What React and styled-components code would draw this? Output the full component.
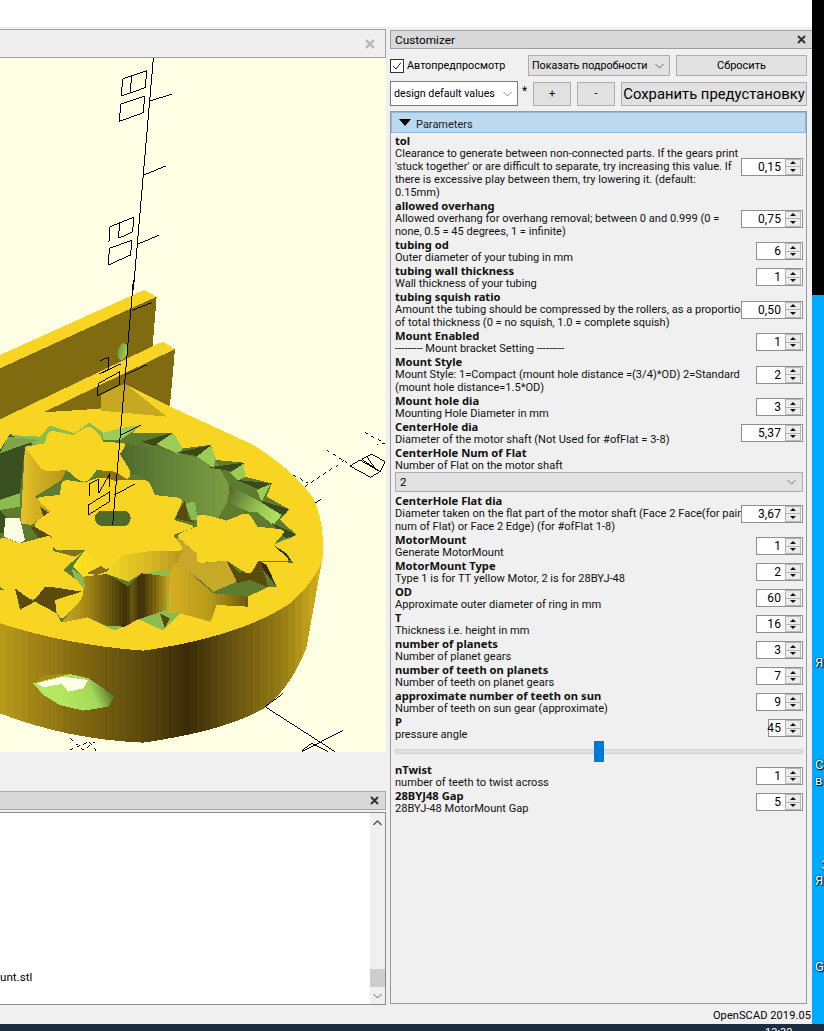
import React from 'react';
import styled, { createGlobalStyle } from 'styled-components';

const UI = `Roboto, "Noto Sans", sans-serif`;

const Global = createGlobalStyle`
  html, body { margin: 0; padding: 0; background: #fff; }
  body { font-family: ${UI}; font-size: 12px; color: #000; overflow: hidden; }
`;

const Page = styled.div`
  width: 824px; height: 1031px; overflow: hidden;
  display: grid; grid-template-columns: 812px 12px; grid-template-rows: 1024px 7px;
`;
const Window = styled.div`
  padding-top: 27px; background: #fff; display: flex; flex-direction: column;
`;
const WindowBody = styled.div`
  flex: 1; background: #f0f0f0; display: flex; flex-direction: column; padding-top: 2px; min-height: 0;
`;
const Docks = styled.div`
  height: 975px; display: grid; grid-template-columns: 386px 422px; column-gap: 4px;
`;
const LeftColumn = styled.div`display: flex; flex-direction: column;`;
const ViewerHeader = styled.div`
  height: 27px; background: #efefef; border: 1px solid #a0a0a0; border-left: 0;
  display: flex; align-items: center; justify-content: flex-end; padding-right: 10px;
`;
const Canvas = styled.div`height: 694px; background: #ffffe5; overflow: hidden; line-height: 0;`;
const ConsoleHeader = styled.div`
  margin-top: 39px; height: 17px; background: #d9d9d9; border: 1px solid #a8a8a8; border-left: 0;
  display: flex; align-items: center; justify-content: flex-end; padding-right: 6px;
`;
const ConsoleBox = styled.div`
  margin-top: 2px; height: 191px; background: #fff; border: 1px solid #8a8a8a; border-left: 0;
  display: grid; grid-template-columns: 1fr 15px;
`;
const ConsoleText = styled.div`
  display: flex; align-items: flex-end; padding-bottom: 20px; font-size: 11.6px; line-height: 14px;
`;
const ScrollTrack = styled.div`
  background: #f0f0f0; display: flex; flex-direction: column; align-items: center; justify-content: space-between;
  padding: 7px 0 5px; position: relative;
`;
const ScrollThumb = styled.div`
  position: absolute; left: 0; right: 0; bottom: 17px; height: 18px; background: #cdcdcd;
`;

const RightColumn = styled.div`display: flex; flex-direction: column; min-width: 0;`;
const DockTitle = styled.div`
  height: 17px; background: #d9d9d9; border: 1px solid #a0a0a0; border-right: 0; margin-top: 1px;
  display: flex; align-items: center; justify-content: space-between; padding: 0 6px 0 4px;
  font-size: 11.8px;
`;
const ToolRow = styled.div`
  display: flex; align-items: center; width: 417px;
  height: ${p => p.$h}px; margin-top: ${p => p.$mt}px;
`;
const CheckLabel = styled.label`
  display: flex; align-items: center; gap: 3px; width: 138px; font-size: 10.8px;
`;
const CheckBox = styled.span`
  width: 12px; height: 12px; border: 1px solid #333; background: #fff; display: flex; align-items: center; justify-content: center;
`;
const Combo = styled.div`
  box-sizing: border-box; width: ${p => p.$w}px; height: ${p => p.$h}px;
  background: ${p => p.$white ? '#fff' : '#e1e1e1'}; border: 1px solid ${p => p.$white ? '#7a7a7a' : '#adadad'};
  display: flex; align-items: center; justify-content: space-between; padding: 0 5px 0 3px;
  font-size: 10.7px; white-space: nowrap; flex: none;
`;
const PushButton = styled.div`
  box-sizing: border-box; width: ${p => p.$w}px; height: ${p => p.$h}px; margin-left: ${p => p.$ml || 0}px; flex: none;
  background: #e1e1e1; border: 1px solid #adadad; display: flex; align-items: center; justify-content: center;
  font-size: ${p => p.$fs || 11}px; white-space: nowrap;
`;
const Star = styled.span`box-sizing: border-box; width: 15px; padding-left: 4px; font-size: 12px; margin-top: -6px; flex: none;`;

const ParamPanel = styled.div`
  box-sizing: border-box; width: 417px; height: 893px; margin-top: 5px; border: 1px solid #9a9a9a; background: #f0f0f0;
`;
const GroupHeader = styled.div`
  box-sizing: border-box; height: 21px; background: #bcd9f0; border: 1px solid #8fb8dc;
  display: flex; align-items: center; gap: 4px; padding: 3px 0 0 7px; font-size: 11px; color: #222;
`;
const Triangle = styled.span`
  width: 0; height: 0; border-left: 6px solid transparent; border-right: 6px solid transparent; border-top: 7px solid #000; margin-right: 1px; margin-top: -4px;
`;
const ParamList = styled.div`padding: 1px 3px 0 4px;`;
const Row = styled.div`
  display: flex; align-items: center; justify-content: space-between; position: relative;
  min-height: 26px;
`;
const RowText = styled.div`white-space: nowrap; line-height: 13px; font-size: 11.08px; color: #111;`;
const ParamName = styled.div`font-family: "Noto Sans", sans-serif; font-weight: 700; font-size: 11.2px;`;
const Spin = styled.div`
  box-sizing: border-box; width: ${p => p.$w}px; height: 18px; background: #fff; border: 1px solid #8f8f8f;
  display: flex; align-items: center; justify-content: flex-end; padding-right: 1px; flex: none;
  position: absolute; right: 0; top: 50%; margin-top: -9px;
`;
const SpinValue = styled.span`font-size: 12px; margin-right: 4px; letter-spacing: .1px; ${p => p.$left ? 'flex:1; padding-left: 1px;' : ''}`;
const SpinButtons = styled.div`
  width: 14px; height: 14px; border: 1px solid #b5b5b5; background: #ececec; display: flex; flex-direction: column; flex: none;
`;
const SpinHalf = styled.div`flex: 1; display: flex; align-items: center; justify-content: center; & + & { border-top: 1px solid #b5b5b5; }`;
const ArrowUp = styled.span`width: 0; height: 0; border-left: 3px solid transparent; border-right: 3px solid transparent; border-bottom: 3px solid #111;`;
const ArrowDown = styled.span`width: 0; height: 0; border-left: 3px solid transparent; border-right: 3px solid transparent; border-top: 3px solid #111;`;
const ChoiceRow = styled.div`
  box-sizing: border-box; height: 20px; margin: 0 0 2px 0; width: 408px; background: #e1e1e1; border: 1px solid #adadad;
  display: flex; align-items: center; justify-content: space-between; padding: 0 6px 0 4px; font-size: 11.5px;
`;
const SliderRow = styled.div`height: 22px; position: relative; display: flex; align-items: center;`;
const SliderTrack = styled.div`width: 408px; height: 3px; background: #e0e0e0; border: 1px solid #d0d0d0; box-sizing: content-box; margin-top: -1px;`;
const SliderThumb = styled.div`position: absolute; left: 199px; top: 0px; width: 10px; height: 21px; background: #0078d7;`;

const StatusBar = styled.div`
  flex: 1; display: flex; align-items: flex-start; justify-content: flex-end; padding: 5px 1px 0 0; font-size: 11px; letter-spacing: .1px; line-height: 14px;
`;

const Desktop = styled.div`
  background: linear-gradient(#000 0 295px, #00aaff 295px); position: relative; overflow: hidden;
`;
const DeskLabel = styled.span`
  position: absolute; left: ${p => p.$x}px; top: ${p => p.$y}px; color: #fff; font-size: 13px; line-height: 14px;
  text-shadow: 0 0 2px #003, 1px 1px 1px #002; white-space: nowrap;
`;
const Taskbar = styled.div`
  grid-column: 1 / 3; background: #1b2d3e; position: relative; overflow: hidden;
`;
const Clock = styled.span`
  position: absolute; left: 765px; top: 2px; color: #fff; font-size: 11px; line-height: 14px;
`;

const X = ({ c = '#333', s = 9 }) => (
  <svg width={s} height={s} viewBox="0 0 9 9"><path d="M1 1 L8 8 M8 1 L1 8" stroke={c} strokeWidth="2" fill="none" /></svg>
);
const Chevron = ({ c = '#666', w = 9, up }) => (
  <svg width={w} height="6" viewBox="0 0 9 6"><path d={up ? 'M.5 5 L4.5 1 L8.5 5' : 'M.5 1 L4.5 5 L8.5 1'} stroke={c} strokeWidth={up ? 1.6 : 1} fill="none" /></svg>
);

const params = [
  { n: 'tol', d: ["Clearance to generate between non-connected parts. If the gears print", "'stuck together' or are difficult to separate, try increasing this value. If", 'there is excessive play between them, try lowering it. (default:', '0.15mm)'], v: '0,15', w: 62 },
  { n: 'allowed overhang', d: ['Allowed overhang for overhang removal; between 0 and 0.999 (0 =', 'none, 0.5 = 45 degrees, 1 = infinite)'], v: '0,75', w: 62 },
  { n: 'tubing od', d: ['Outer diameter of your tubing in mm'], v: '6', w: 47 },
  { n: 'tubing wall thickness', d: ['Wall thickness of your tubing'], v: '1', w: 47 },
  { n: 'tubing squish ratio', d: ['Amount the tubing should be compressed by the rollers, as a proportion', 'of total thickness (0 = no squish, 1.0 = complete squish)'], v: '0,50', w: 62 },
  { n: 'Mount Enabled', d: ['--------- Mount bracket Setting ---------'], v: '1', w: 47 },
  { n: 'Mount Style', d: ['Mount Style: 1=Compact (mount hole distance =(3/4)*OD) 2=Standard', '(mount hole distance=1.5*OD)'], v: '2', w: 47 },
  { n: 'Mount hole dia', d: ['Mounting Hole Diameter in mm'], v: '3', w: 47 },
  { n: 'CenterHole dia', d: ['Diameter of the motor shaft (Not Used for #ofFlat = 3-8)'], v: '5,37', w: 62 },
  { n: 'CenterHole Num of Flat', d: ['Number of Flat on the motor shaft'], choice: '2' },
  { n: 'CenterHole Flat dia', d: ['Diameter taken on the flat part of the motor shaft (Face 2 Face(for pair', 'num of Flat) or Face 2 Edge) (for #ofFlat 1-8)'], v: '3,67', w: 62 },
  { n: 'MotorMount', d: ['Generate MotorMount'], v: '1', w: 47 },
  { n: 'MotorMount Type', d: ['Type 1 is for TT yellow Motor, 2 is for 28BYJ-48'], v: '2', w: 47 },
  { n: 'OD', d: ['Approximate outer diameter of ring in mm'], v: '60', w: 47 },
  { n: 'T', d: ['Thickness i.e. height in mm'], v: '16', w: 47 },
  { n: 'number of planets', d: ['Number of planet gears'], v: '3', w: 47 },
  { n: 'number of teeth on planets', d: ['Number of teeth on planet gears'], v: '7', w: 47 },
  { n: 'approximate number of teeth on sun', d: ['Number of teeth on sun gear (approximate)'], v: '9', w: 47 },
  { n: 'P', d: ['pressure angle'], v: '45', w: 35, left: true, slider: true },
  { n: 'nTwist', d: ['number of teeth to twist across'], v: '1', w: 47 },
  { n: '28BYJ48 Gap', d: ['28BYJ-48 MotorMount Gap'], v: '5', w: 47 },
];

const SpinBox = ({ w, v, left }) => (
  <Spin $w={w}>
    <SpinValue $left={left}>{v}</SpinValue>
    <SpinButtons>
      <SpinHalf><ArrowUp /></SpinHalf>
      <SpinHalf><ArrowDown /></SpinHalf>
    </SpinButtons>
  </Spin>
);

const Param = ({ p }) => (
  <>
    <Row>
      <RowText>
        <ParamName>{p.n}</ParamName>
        {p.d.map((l, i) => <div key={i}>{l}</div>)}
      </RowText>
      {p.v && <SpinBox w={p.w} v={p.v} left={p.left} />}
    </Row>
    {p.choice && <ChoiceRow>{p.choice}<Chevron c="#777" w={9} /></ChoiceRow>}
    {p.slider && <SliderRow><SliderTrack /><SliderThumb /></SliderRow>}
  </>
);

/* stepped gradient stops, so curved walls show their facets */
const steps = (stops, n) => {
  const hex = c => [1, 3, 5].map(i => parseInt(c.slice(i, i + 2), 16));
  const out = [];
  for (let i = 0; i < n; i++) {
    const t = i / (n - 1);
    let k = 0;
    while (k < stops.length - 2 && t > stops[k + 1][0]) k++;
    const [a, ca] = stops[k]; const [b, cb] = stops[k + 1];
    const f = Math.min(1, Math.max(0, (t - a) / (b - a)));
    const A = hex(ca), B = hex(cb);
    const col = `rgb(${A.map((v, j) => Math.round(v + (B[j] - v) * f)).join(',')})`;
    out.push(<stop key={i * 2} offset={i / n} stopColor={col} />);
    out.push(<stop key={i * 2 + 1} offset={(i + 1) / n} stopColor={col} />);
  }
  return out;
};

/* gear outline: outward corners rounded into lobes, valleys left sharp */
const gearPath = (pts, r) => {
  const P = pts.trim().split(/\s+/).map(s => s.split(',').map(Number));
  const n = P.length;
  let area = 0;
  P.forEach((a, i) => { const b = P[(i + 1) % n]; area += a[0] * b[1] - b[0] * a[1]; });
  let d = '';
  P.forEach((c, i) => {
    const a = P[(i + n - 1) % n], b = P[(i + 1) % n];
    const cross = (c[0] - a[0]) * (b[1] - c[1]) - (c[1] - a[1]) * (b[0] - c[0]);
    if (cross * area > 0) {
      const la = Math.hypot(a[0] - c[0], a[1] - c[1]), lb = Math.hypot(b[0] - c[0], b[1] - c[1]);
      const ra = Math.min(r, la / 2), rb = Math.min(r, lb / 2);
      const s = [c[0] + (a[0] - c[0]) * ra / la, c[1] + (a[1] - c[1]) * ra / la];
      const e = [c[0] + (b[0] - c[0]) * rb / lb, c[1] + (b[1] - c[1]) * rb / lb];
      d += `${d ? 'L' : 'M'}${s[0]} ${s[1]} Q${c[0]} ${c[1]} ${e[0]} ${e[1]} `;
    } else {
      d += `${d ? 'L' : 'M'}${c[0]} ${c[1]} `;
    }
  });
  return d + 'Z';
};

const Y = '#f8d423';
const Poly = ({ p, f }) => <polygon points={p} fill={f} />;
const Gear = ({ p, r = 18 }) => <path d={gearPath(p, r)} fill={Y} />;
const DARK = '#3c4a18';
const LIGHT = '#9ccc55';

const Model = () => (
  <svg width="386" height="694" viewBox="0 0 386 694" shapeRendering="crispEdges">
    <defs>
      <linearGradient id="side" gradientUnits="userSpaceOnUse" x1="0" y1="0" x2="970" y2="0">
        {steps([[0, '#b59a1a'], [.2, '#8a7012'], [.42, '#5f4c0c'], [.58, '#3a2c08'], [.72, '#665210'], [.88, '#957c14'], [1, '#d4b01c']], 46)}
      </linearGradient>
      <linearGradient id="wall" gradientUnits="userSpaceOnUse" x1="360" y1="0" x2="690" y2="0">
        {steps([[0, '#4f6b2c'], [.5, '#66863a'], [1, '#7a9c40']], 16)}
      </linearGradient>
      <linearGradient id="mid" gradientUnits="userSpaceOnUse" x1="185" y1="0" x2="510" y2="0">
        {steps([[0, '#c8a820'], [.2, '#a88c18'], [.38, '#7a6410'], [.6, '#3e300a'], [.66, '#6a560e'], [.74, '#3a2c08'], [.9, '#8a7212'], [1, '#c0a01e']], 30)}
      </linearGradient>
      <linearGradient id="rightCyl" gradientUnits="userSpaceOnUse" x1="505" y1="0" x2="745" y2="0">
        {steps([[0, '#d2ae20'], [.5, '#bb9c1a'], [1, '#705c10']], 20)}
      </linearGradient>
      <linearGradient id="leftCyl" gradientUnits="userSpaceOnUse" x1="60" y1="0" x2="190" y2="0">
        <stop offset="0" stopColor="#e8c428" /><stop offset=".4" stopColor="#d2ae22" /><stop offset="1" stopColor="#b89a1c" />
      </linearGradient>
      <linearGradient id="bevel" gradientUnits="userSpaceOnUse" x1="220" y1="0" x2="550" y2="0">
        {steps([[0, '#ffe21e'], [.4, '#ead022'], [.7, '#d8b824'], [1, '#b89c22']], 14)}
      </linearGradient>
      <linearGradient id="shine" gradientUnits="userSpaceOnUse" x1="690" y1="630" x2="830" y2="700">
        <stop offset="0" stopColor="#5a6c2c" /><stop offset=".6" stopColor="#93c052" /><stop offset="1" stopColor="#aee060" />
      </linearGradient>
      <linearGradient id="holeG" gradientUnits="userSpaceOnUse" x1="200" y1="1290" x2="340" y2="1230">
        <stop offset="0" stopColor="#b4e860" /><stop offset=".6" stopColor="#a4d858" /><stop offset="1" stopColor="#4f6a28" />
      </linearGradient>
      <linearGradient id="oval" gradientUnits="userSpaceOnUse" x1="352" y1="0" x2="386" y2="0">
        <stop offset="0" stopColor="#6f9438" /><stop offset="1" stopColor="#a8dc5c" />
      </linearGradient>
    </defs>

    {/* upper part of the Z axis */}
    <g transform="translate(0 -58) scale(.33333)" fill="none" stroke="#000" strokeWidth="3">
      <polyline points="460,175 400,870" />
      <polyline points="450,303 516,282" />
      <polyline points="432,525 497,498" />
      <polyline points="412,733 476,706" />
      <polygon points="368,236 440,212 436,263 364,288" />
      <polyline points="395,228 390,278" />
      <polygon points="362,312 434,288 430,338 358,364" />
      <polyline points="327,725 330,680 401,652 398,695 356,715 358,670" />
      <polygon points="328,745 395,721 392,765 325,795" />
    </g>

    <g transform="translate(0 222) scale(.33333)">
      {/* back brackets */}
      <Poly p="0,265 470,50 458,195 440,300 0,420" f="#806b10" />
      <Poly p="0,225 432,30 470,50 0,265" f={Y} />
      <ellipse cx="368" cy="215" rx="15" ry="25" fill="url(#oval)" transform="rotate(12 368 215)" />
      <Poly p="130,397 525,207 510,375 440,420 130,420" f="#806b10" />
      <Poly p="0,418 487,185 525,207 130,397 0,460" f={Y} />
      <Poly p="0,460 130,397 300,400 0,520" f={Y} />

      {/* side wall of the ring */}
      <path d="M968 830 L920 1100 Q880 1210 800 1280 Q690 1350 430 1388 Q200 1378 0 1300 L0 1000 Z" fill="url(#side)" />
      {/* top face of the ring */}
      <path d="M0 470 L130 397 L300 386 L375 312 L500 375 L760 495 Q880 570 940 655 Q972 720 970 830 Q950 900 870 970 Q720 1070 430 1112 Q200 1095 0 1030 Z" fill={Y} />
      <Poly p="303,345 375,310 500,410 303,392" f="#c6a822" />

      {/* cavity */}
      <Poly p="0,510 30,465 120,470 150,437 225,460 268,428 310,458 420,436 395,460 520,458 548,505 632,495 648,540 732,548 735,590 815,610 800,650 868,688 840,720 890,765 820,795 878,848 780,845 830,920 803,922 743,950 743,980 650,975 632,1025 540,1000 490,1052 410,1015 345,1052 262,1012 185,1028 170,1000 130,950 100,965 60,990 45,925 0,930" f="#5d7c30" />
      <Poly p="0,510 30,462 120,485 75,500 60,640 0,660" f="#3a5020" />
      <Poly p="30,465 120,470 150,437 225,460 268,428 310,458 330,470 120,500" f="#8cbc50" />
      <Poly p="25,470 120,480 70,495 0,520" f="#7ea648" />
      <Poly p="310,458 400,436 420,440 360,480 310,480" f={LIGHT} />
      <Poly p="0,660 60,640 60,680 0,690" f="#8cbc50" />
      <Poly p="0,690 30,720 15,760 0,760" f="#3a5020" />
      <Poly p="15,715 60,715 75,780 60,790 12,770" f="#ffffe5" />
      <Poly p="90,740 160,745 170,790 120,780" f="#5a4a0c" />

      {/* big inner wall and its teeth */}
      <Poly p="360,522 380,492 535,520 648,545 690,620 680,670 650,720 590,700 555,680 465,645 445,600 395,580" f="url(#wall)" />
      <Poly p="425,485 518,458 524,478 462,498" f={DARK} />
      <Poly p="470,492 520,458 548,505 535,522" f={LIGHT} />
      <Poly p="530,518 632,495 622,524 590,528" f={DARK} />
      <Poly p="590,530 632,497 648,535 640,562" f={LIGHT} />
      <Poly p="628,562 732,548 722,575 680,572" f={DARK} />
      <Poly p="690,578 732,550 735,590 715,602" f={LIGHT} />
      <Poly p="712,600 815,610 800,635 780,630" f={DARK} />
      <Poly p="770,630 812,612 785,665" f={LIGHT} />
      <Poly p="775,660 868,688 845,708" f={DARK} />
      <Poly p="688,618 780,665 845,705 820,735 770,695 745,695 690,670" f="url(#shine)" />
      <Poly p="555,670 585,665 590,700 600,720 575,720" f="#8cbc50" />
      <Poly p="815,728 890,765 860,778 830,745" f={DARK} />
      <Poly p="860,775 820,795 845,785 870,770" f={LIGHT} />
      <Poly p="525,715 555,660 565,715 590,730" f="#5a4a0c" />

      {/* lower cylinders */}
      <Poly p="215,865 250,890 320,880 385,920 425,880 512,868 510,1000 540,1000 490,1052 410,1015 345,1052 262,1012 185,1028 240,960" f="#8cbc50" />
      <Poly p="250,890 320,880 385,920 425,880 510,890 500,990 410,1020 375,1040 320,1038 262,1012 185,1028 240,960 255,920" f="url(#mid)" />
      <Poly p="510,870 530,845 640,940 743,950 743,980 650,975 632,1025 540,1000 505,1000" f="url(#rightCyl)" />
      <Poly p="480,1000 510,1015 495,1045" f="#5a4a0c" />
      <Poly p="530,770 590,820 600,850 680,842 712,905 640,935 600,900 530,850" f="#c8a828" />
      <Poly p="680,842 720,880 780,842 805,922 750,900 712,910" f="#5a4a0c" />
      <Poly p="780,845 800,855 830,920 790,870" f="#3a2c08" />
      <Poly p="820,795 860,820 878,848 845,825" f="#2e3a10" />

      {/* top-left planet and its body */}
      <Poly p="62,730 75,500 135,490 200,570 185,600 105,650 150,695 95,735" f="url(#leftCyl)" />
      <Gear p="75,500 135,490 145,450 220,465 268,435 300,465 310,485 382,490 360,522 395,580 380,605 345,575 290,570 265,605 240,605 200,570 130,575" />
      <Poly p="290,572 345,575 385,600 350,605 320,600" f="#8a7012" />
      <Poly p="120,680 150,700 130,710" f="#5a4a0c" />

      {/* sun gear bevel then face */}
      <Poly p="218,860 255,810 320,875 365,825 460,810 550,812 512,870 425,880 385,905 320,882 250,890" f="url(#bevel)" />
      <Poly p="260,880 330,845 320,875 290,885" f="#8a7012" />
      <Gear r={22} p="105,652 180,645 185,598 255,608 300,590 345,602 385,600 445,598 465,645 552,655 522,720 590,740 520,765 555,812 460,812 365,825 320,875 255,810 160,812 155,770 95,735 150,695" />
      <rect x="285" y="692" width="107" height="46" rx="22" fill="#4f6b2c" />

      {/* right planet */}
      <Gear r={22} p="590,700 640,710 680,722 745,695 772,740 860,750 820,795 875,845 775,842 750,887 680,842 590,850 590,820 525,765 590,740" />

      {/* lower-left planet */}
      <Gear p="0,768 60,790 155,765 160,812 250,815 190,870 230,900 255,930 240,965 185,1020 170,998 135,920 100,965 45,925 0,930" />
      <Poly p="45,925 62,988 105,965 170,1000 165,960 245,935 150,920 135,920 100,965" f="#5a4a0c" />
      <Poly p="155,812 250,815 225,830" f="#8a7012" />

      {/* hole through the wall */}
      <Poly p="100,1210 130,1185 215,1183 265,1195 310,1225 342,1250 325,1280 250,1292 180,1275 130,1245" f="url(#holeG)" />
      <Poly p="110,1210 190,1190 265,1200 250,1225 205,1235 185,1212 130,1222" f="#ffffe5" />
      <Poly p="100,1210 130,1185 210,1182 120,1205" f="#a88c18" />

      {/* axes */}
      <g fill="none" stroke="#000" strokeWidth="3">
        <polyline points="400,0 338,735" />
        <polyline points="395,92 455,68" />
        <polyline points="375,285 440,255" />
        <polyline points="362,465 422,436" />
        <polyline points="343,645 405,612" />
        <polyline points="300,242 325,232 325,268 298,282 362,252" />
        <polygon points="295,310 360,275 358,315 292,347" />
        <polyline points="268,648 270,610 296,598 296,640 330,580 328,620" />
        <polygon points="265,675 330,635 328,665 265,705" />
        <polyline points="795,1280 1005,1415" />
        <polyline points="850,1240 795,1280" />
        <polyline points="1028,1352 905,1415" />
        <polyline points="905,1412 935,1390 985,1415" />
        <polyline points="945,670 962,658" />
        <polygon points="1050,558 1080,540 1140,575 1112,592" />
        <polygon points="1085,538 1115,522 1155,545 1140,575" />
        <polyline points="1100,530 1128,568" />
      </g>
      <g fill="none" stroke="#000" strokeWidth="3" strokeDasharray="10 12">
        <polyline points="915,620 1035,540" />
        <polyline points="980,510 1040,548" />
        <polyline points="880,585 925,610" />
        <polyline points="1095,458 1155,490 1130,495" />
        <polyline points="210,1375 250,1410 285,1385" />
        <polyline points="210,1410 268,1385 290,1415" />
      </g>
    </g>
  </svg>
);

export default function App() {
  return (
    <Page>
      <Global />
      <Window>
        <WindowBody>
          <Docks>
            <LeftColumn>
              <ViewerHeader><X c="#b5b5b5" s={10} /></ViewerHeader>
              <Canvas><Model /></Canvas>
              <ConsoleHeader><X c="#333" /></ConsoleHeader>
              <ConsoleBox>
                <ConsoleText>unt.stl</ConsoleText>
                <ScrollTrack>
                  <Chevron c="#666" up />
                  <ScrollThumb />
                  <Chevron c="#666" />
                </ScrollTrack>
              </ConsoleBox>
            </LeftColumn>
            <RightColumn>
              <DockTitle>Customizer<X /></DockTitle>
              <ToolRow $h={21} $mt={6}>
                <CheckLabel>
                  <CheckBox>
                    <svg width="10" height="10" viewBox="0 0 10 10"><path d="M1 5 L4 8 L9 1.5" stroke="#222" fill="none" /></svg>
                  </CheckBox>
                  Автопредпросмотр
                </CheckLabel>
                <Combo $w={142} $h={21}>Показать подробности<Chevron c="#666" /></Combo>
                <PushButton $w={131} $h={21} $ml={6}>Сбросить</PushButton>
              </ToolRow>
              <ToolRow $h={25} $mt={5}>
                <Combo $w={128} $h={25} $white>design default values<Chevron c="#888" /></Combo>
                <Star>*</Star>
                <PushButton $w={38} $h={24}>+</PushButton>
                <PushButton $w={38} $h={24} $ml={6}>-</PushButton>
                <PushButton $w={186} $h={24} $ml={6} $fs={14.8}>Сохранить предустановку</PushButton>
              </ToolRow>
              <ParamPanel>
                <GroupHeader><Triangle />Parameters</GroupHeader>
                <ParamList>
                  {params.map(p => <Param key={p.n} p={p} />)}
                </ParamList>
              </ParamPanel>
            </RightColumn>
          </Docks>
          <StatusBar>OpenSCAD 2019.05</StatusBar>
        </WindowBody>
      </Window>
      <Desktop>
        <DeskLabel $x={3} $y={656}>Ян</DeskLabel>
        <DeskLabel $x={3} $y={758}>С</DeskLabel>
        <DeskLabel $x={3} $y={774}>в</DeskLabel>
        <DeskLabel $x={9} $y={858}>З</DeskLabel>
        <DeskLabel $x={3} $y={874}>Я</DeskLabel>
        <DeskLabel $x={3} $y={960}>Ga</DeskLabel>
      </Desktop>
      <Taskbar><Clock>13:32</Clock></Taskbar>
    </Page>
  );
}
